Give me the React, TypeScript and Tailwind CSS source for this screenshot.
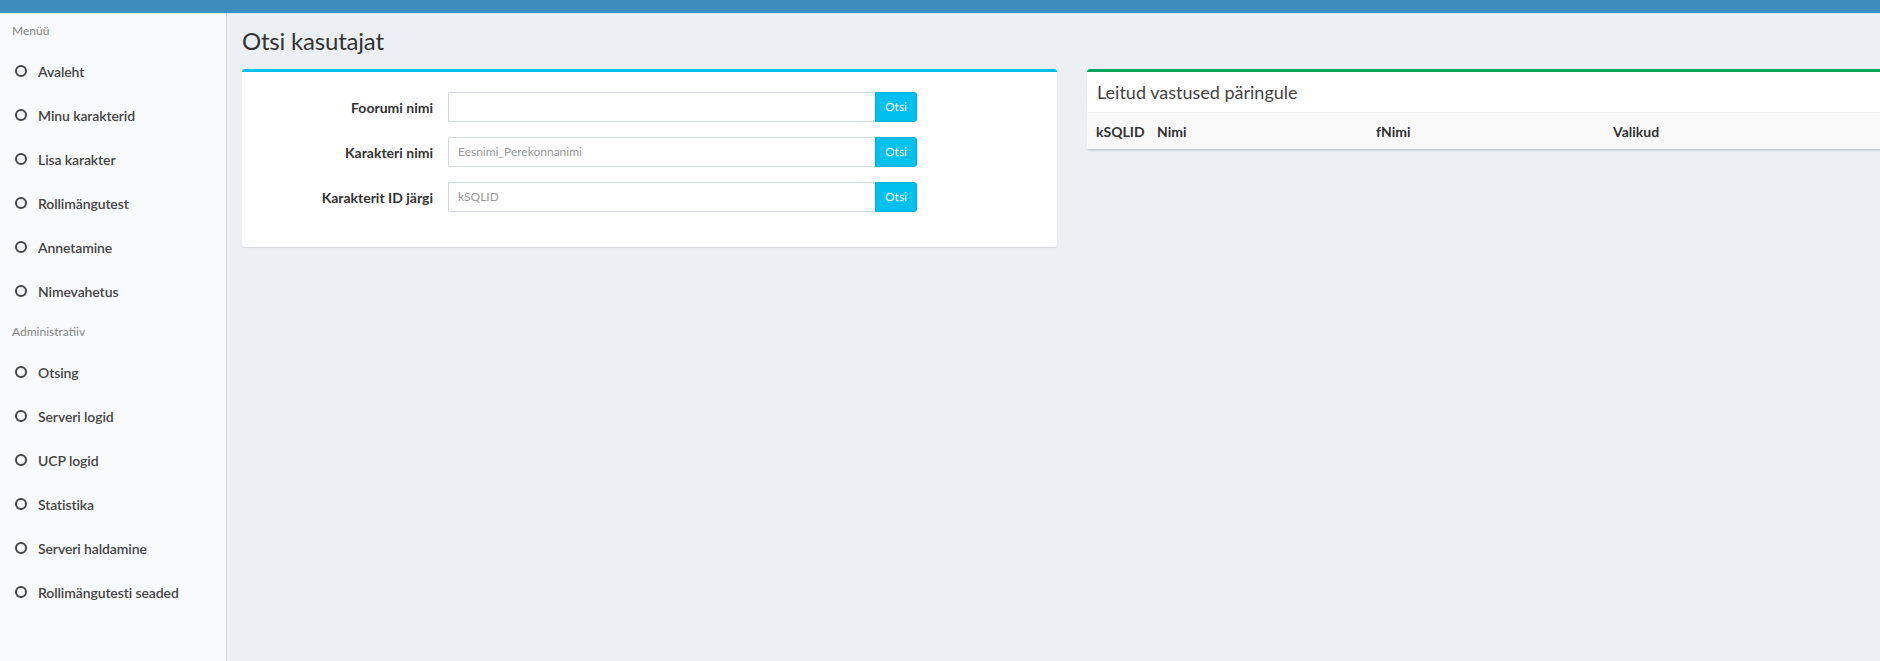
const menu = ["Avaleht", "Minu karakterid", "Lisa karakter", "Rollimängutest", "Annetamine", "Nimevahetus"];
const admin = ["Otsing", "Serveri logid", "UCP logid", "Statistika", "Serveri haldamine", "Rollimängutesti seaded"];

const fields = [
  { label: "Foorumi nimi", placeholder: "" },
  { label: "Karakteri nimi", placeholder: "Eesnimi_Perekonnanimi" },
  { label: "Karakterit ID järgi", placeholder: "kSQLID" },
];

function NavHeader({ title }: { title: string }) {
  return (
    <div className="h-[37px] flex items-center pb-[2px] px-[12px] text-[12px] text-[#848484]">
      {title}
    </div>
  );
}

function NavItem({ label }: { label: string }) {
  return (
    <a className="h-[44px] flex items-center pb-[2px] pl-[15px] text-[14px] font-semibold text-[#444] tracking-[-0.1px] cursor-pointer">
      <span className="w-[12px] h-[12px] rounded-full border-2 border-[#444] shrink-0" />
      <span className="ml-[11px]">{label}</span>
    </a>
  );
}

export default function App() {
  return (
    <div className="h-screen flex flex-col overflow-hidden font-['Lato',sans-serif] text-[#333]">
      <div className="h-[13px] shrink-0 bg-[#3c8dbc]" />
      <div className="flex flex-1 min-h-0">
        <aside className="w-[227px] shrink-0 bg-[#f9fafc] border-r border-[#d2d6de]">
          <NavHeader title="Menüü" />
          {menu.map((m) => (
            <NavItem key={m} label={m} />
          ))}
          <NavHeader title="Administratiiv" />
          {admin.map((m) => (
            <NavItem key={m} label={m} />
          ))}
        </aside>

        <main className="flex-1 min-w-0 bg-[#ecf0f5] pl-[15px] overflow-hidden">
          <h1 className="h-[56px] flex items-center text-[24px] text-[#333] tracking-[-0.2px]">Otsi kasutajat</h1>

          <div className="flex items-start gap-[30px]">
            {/* search form */}
            <section className="w-[815px] shrink-0 bg-white rounded-[3px] border-t-[3px] border-[#00c0ef] shadow-[0_1px_1px_rgba(0,0,0,0.1)] pt-[20px] pb-[35px] flex flex-col gap-[15px]">
              {fields.map((f) => (
                <div key={f.label} className="flex items-center">
                  <label className="w-[191px] text-right text-[14px] font-bold text-[#333]">{f.label}</label>
                  <div className="ml-[15px] flex h-[30px]">
                    <input
                      placeholder={f.placeholder}
                      className="w-[427px] border border-r-0 border-[#d2d6de] rounded-l-[2px] px-[9px] pb-[1px] text-[12px] text-[#555] placeholder:text-[#999] outline-none"
                    />
                    <button className="w-[42px] bg-[#00c0ef] border border-[#00acd6] rounded-r-[3px] text-white text-[12px]">
                      Otsi
                    </button>
                  </div>
                </div>
              ))}
            </section>

            {/* results */}
            <section className="w-[815px] shrink-0 bg-white rounded-[3px] border-t-[3px] border-[#00a65a] shadow-[0_2px_1px_rgba(0,0,0,0.12)]">
              <div className="h-[40px] flex items-center px-[10px] text-[18px] text-[#444]">
                Leitud vastused päringule
              </div>
              <div className="h-[37px] grid grid-cols-[62px_219px_237px_1fr] items-center bg-[#f9f9f9] border-t border-[#f0f0f0] text-[14px] font-bold text-[#333]">
                <div className="pl-[9px]">kSQLID</div>
                <div className="pl-[8px]">Nimi</div>
                <div className="pl-[8px]">fNimi</div>
                <div className="pl-[8px]">Valikud</div>
              </div>
            </section>
          </div>
        </main>
      </div>
    </div>
  );
}
